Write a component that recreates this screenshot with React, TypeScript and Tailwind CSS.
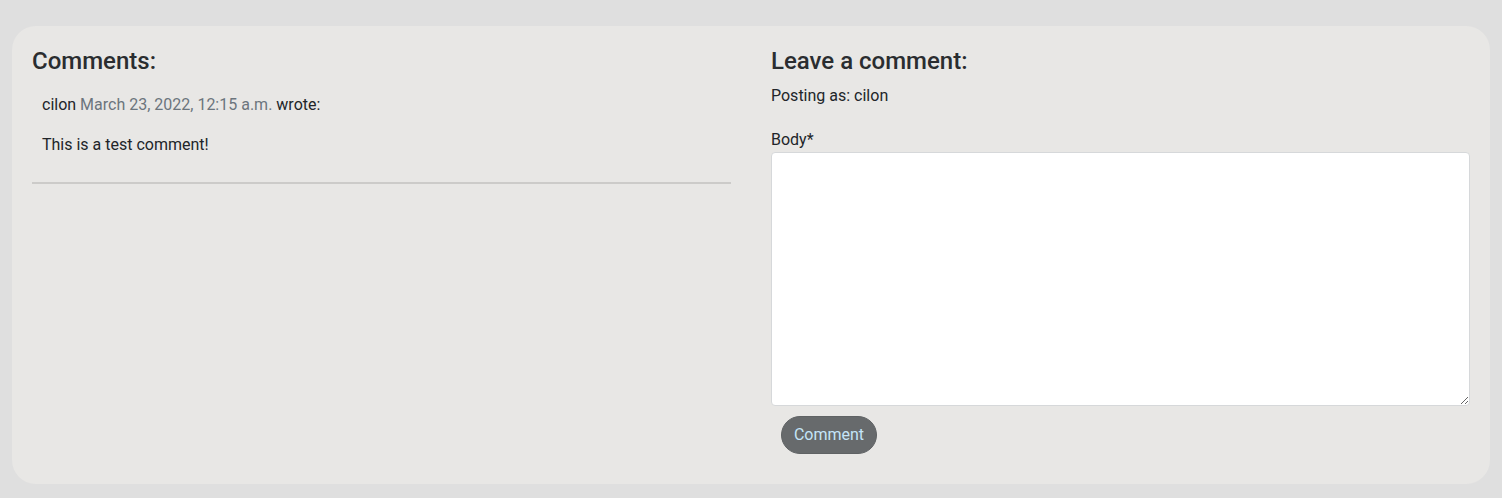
export default function App() {
  return (
    <div
      className="min-h-screen bg-[#dfdfdf] px-3 pt-[26px] pb-[15px] text-[#212529]"
      style={{ fontFamily: "Roboto, 'Liberation Sans', sans-serif" }}
    >
      <div className="grid grid-cols-2 gap-10 rounded-3xl bg-[#e8e7e5] px-5 pt-[21px] pb-[30px]">
        <section>
          <h3 className="mb-2 text-2xl leading-[1.2] font-medium text-[#2a2d30]">Comments:</h3>
          <div className="px-[10px] pt-[9px] pb-[9px]">
            <p className="mb-4 leading-6">
              cilon <span className="text-[#6c757d]">March 23, 2022, 12:15 a.m.</span> wrote:
            </p>
            <p className="mb-4 leading-6">This is a test comment!</p>
          </div>
          <hr className="border-0 border-t-2 border-[#cccbc9]" />
        </section>

        <section>
          <h3 className="mb-2 text-2xl leading-[1.2] font-medium text-[#2a2d30]">Leave a comment:</h3>
          <p className="leading-6">Posting as: cilon</p>
          <form className="mt-5">
            <label htmlFor="body" className="block leading-6">
              Body*
            </label>
            <textarea
              id="body"
              className="block h-[254px] w-full rounded border border-[#d6d8da] bg-white px-3 py-1.5"
            />
            <button
              type="button"
              className="mt-[10px] ml-[10px] h-[38px] w-[96px] rounded-full border border-[#5f6264] bg-[#676a6c] leading-6 text-[#c4e5f8]"
            >
              Comment
            </button>
          </form>
        </section>
      </div>
    </div>
  );
}
